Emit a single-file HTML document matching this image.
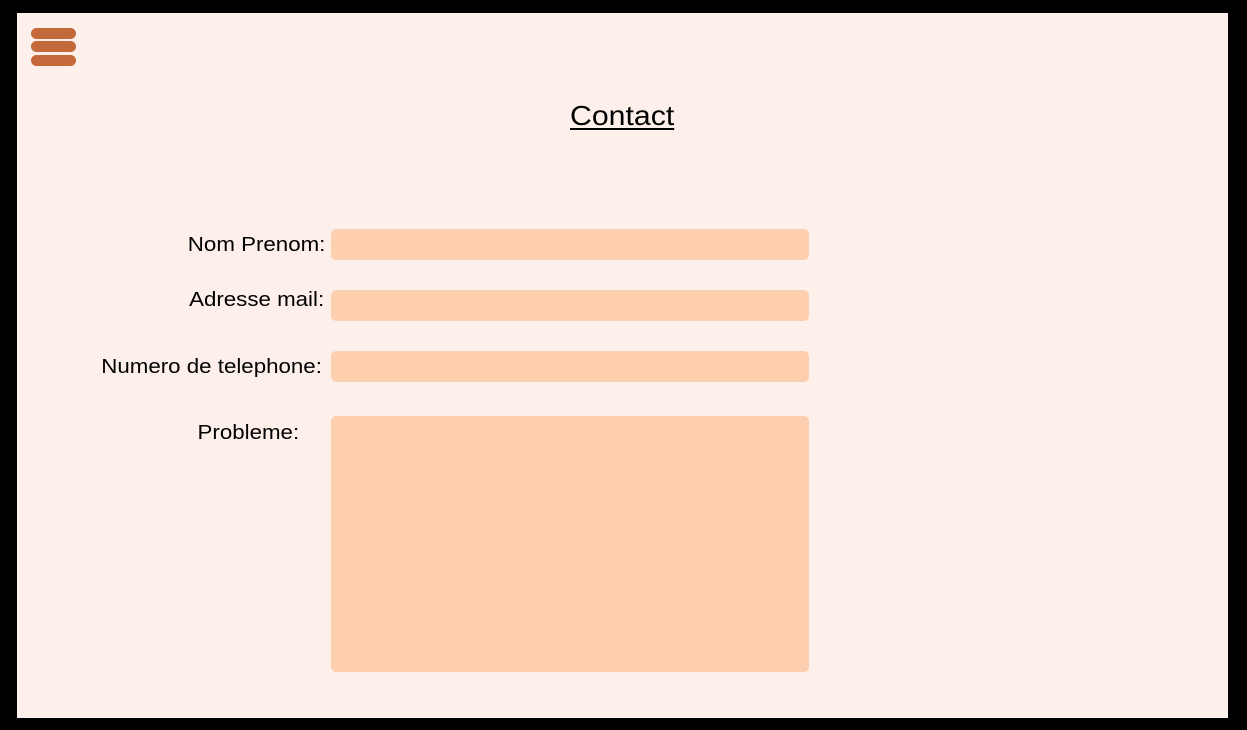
<!DOCTYPE html>
<html><head><meta charset="utf-8"><style>
html,body{margin:0;padding:0;width:1247px;height:730px;background:#000;overflow:hidden;font-family:"Liberation Sans",Arial,sans-serif;color:#000}
.page{position:absolute;left:17px;top:13px;width:1211px;height:705px;background:#fdf0eb}
.bar{position:absolute;left:31px;width:45px;height:11px;border-radius:6px;background:#c4693a}
.t{position:absolute;font-size:28px;text-decoration:underline;text-underline-offset:3px;transform:scaleX(1.08);transform-origin:left}
.l{position:absolute;font-size:20px;text-align:right;transform:scaleX(1.115);transform-origin:right;white-space:nowrap}
.in{position:absolute;left:331px;width:478px;height:31px;background:#fecfae;border-radius:5px}
</style></head><body>
<div class="page"></div>
<div class="bar" style="top:28px"></div>
<div class="bar" style="top:41px"></div>
<div class="bar" style="top:55px"></div>
<div class="t" style="left:570px;top:100px">Contact</div>
<div class="l" style="right:922px;top:234px">Nom Prenom:</div>
<div class="l" style="right:923px;top:289px">Adresse mail:</div>
<div class="l" style="right:925px;top:356px">Numero de telephone:</div>
<div class="l" style="right:948px;top:422px">Probleme:</div>
<div class="in" style="top:229px"></div>
<div class="in" style="top:290px"></div>
<div class="in" style="top:351px"></div>
<div class="in" style="top:416px;height:256px"></div>
</body></html>
